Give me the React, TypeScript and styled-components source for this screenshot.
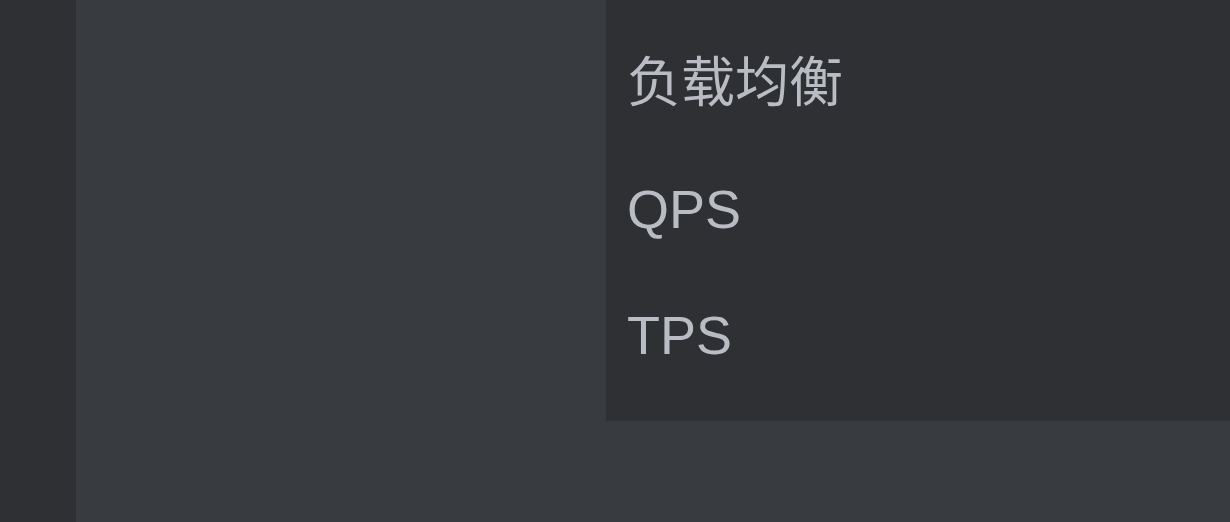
import React from 'react'
import styled, { createGlobalStyle } from 'styled-components'

const GlobalStyle = createGlobalStyle`
  html, body {
    margin: 0;
    padding: 0;
    background: #383b40;
  }
  #root {
    height: 522px;
  }
`

const Layout = styled.div`
  display: flex;
  height: 522px;
  overflow: hidden;
  font-family: "Liberation Sans", "Noto Sans CJK SC", sans-serif;
`

const Sidebar = styled.aside`
  width: 76px;
  flex-shrink: 0;
  background: #2f3034;
`

const Main = styled.main`
  flex: 1;
  display: flex;
  justify-content: flex-end;
  align-items: flex-start;
  background: #383b40;
`

const Menu = styled.ul`
  list-style: none;
  margin: 0;
  width: 624px;
  padding: 20px 0 23px 21px;
  box-sizing: border-box;
  background: #2f3034;
`

const MenuItem = styled.li`
  height: 126px;
  line-height: 126px;
  font-size: 54px;
  color: #b9bdc3;
  white-space: nowrap;
  cursor: pointer;
`

const items = ['负载均衡', 'QPS', 'TPS']

export default function App() {
  return (
    <>
      <GlobalStyle />
      <Layout>
        <Sidebar />
        <Main>
          <Menu>
            {items.map((label) => (
              <MenuItem key={label}>{label}</MenuItem>
            ))}
          </Menu>
        </Main>
      </Layout>
    </>
  )
}
